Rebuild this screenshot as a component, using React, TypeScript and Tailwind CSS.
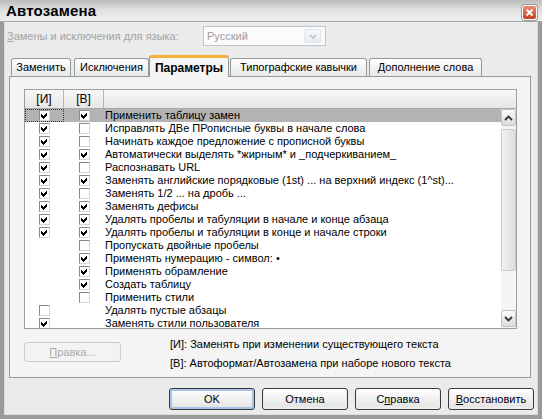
import React from 'react';

type Row = { t: string; a: boolean | null; b: boolean | null };

const rows: Row[] = [
  { t: 'Применить таблицу замен', a: true, b: true },
  { t: 'Исправлять ДВе ПРописные буквы в начале слова', a: true, b: false },
  { t: 'Начинать каждое предложение с прописной буквы', a: true, b: false },
  { t: 'Автоматически выделять *жирным* и _подчеркиванием_', a: true, b: true },
  { t: 'Распознавать URL', a: true, b: false },
  { t: 'Заменять английские порядковые (1st) ... на верхний индекс (1^st)...', a: true, b: true },
  { t: 'Заменять 1/2 ... на дробь ...', a: true, b: false },
  { t: 'Заменять дефисы', a: true, b: true },
  { t: 'Удалять пробелы и табуляции в начале и конце абзаца', a: true, b: true },
  { t: 'Удалять пробелы и табуляции в конце и начале строки', a: true, b: true },
  { t: 'Пропускать двойные пробелы', a: null, b: false },
  { t: 'Применять нумерацию - символ: •', a: null, b: true },
  { t: 'Применять обрамление', a: null, b: true },
  { t: 'Создать таблицу', a: null, b: true },
  { t: 'Применить стили', a: null, b: false },
  { t: 'Удалять пустые абзацы', a: false, b: null },
  { t: 'Заменять стили пользователя', a: true, b: null },
];

const font = { fontFamily: '"Liberation Sans", Arial, sans-serif' };

// Checkbox
const Check: React.FC<{ on: boolean }> = ({ on }) => (
  <div className="w-[11px] h-[11px] bg-white border border-t-[#8a8a8a] border-l-[#8a8a8a] border-b-[#d6d6d6] border-r-[#d6d6d6]">
    {on && (
      <svg width="9" height="9" viewBox="0 0 9 9" shapeRendering="crispEdges">
        <polygon points="1,3 3,5 7,1 7,4 3,8 1,6" fill="#000" />
      </svg>
    )}
  </div>
);

// Scroll arrow button
const ScrollBtn: React.FC<{ up?: boolean }> = ({ up }) => (
  <div className="h-[17px] w-[15px] rounded-[2px] border border-[#c3c3c3] bg-gradient-to-b from-[#fbfbfb] to-[#dcdcdc] flex items-center justify-center">
    <svg width="9" height="6" viewBox="0 0 9 6">
      <path d={up ? 'M1 5 L4.5 1.5 L8 5' : 'M1 1 L4.5 4.5 L8 1'} fill="none" stroke="#333" strokeWidth="1.8" />
    </svg>
  </div>
);

// Tab
const Tab: React.FC<{ label: string; active?: boolean; className?: string }> = ({ label, active, className = '' }) =>
  active ? (
    <div
      className={`relative z-10 -mb-[1px] h-[22px] bg-[#f4f4f4] border border-b-0 border-[#919b9c] border-t-[3px] border-t-[#f2b23a] rounded-t-[3px] flex items-center justify-center text-[12px] font-bold text-black ${className}`}
    >
      {label}
    </div>
  ) : (
    <div
      className={`h-[18px] bg-gradient-to-b from-white to-[#e8e8e8] border border-b-0 border-[#919b9c] rounded-t-[3px] flex items-center justify-center text-[11px] text-black ${className}`}
    >
      {label}
    </div>
  );

// Dialog button
const Btn: React.FC<{ children: React.ReactNode; def?: boolean }> = ({ children, def }) => (
  <div
    className={`w-[86px] h-[22px] rounded-[3px] border border-[#3a3a3a] bg-gradient-to-b from-white to-[#e2e2e2] flex items-center justify-center text-[11px] text-black ${
      def ? 'shadow-[inset_0_0_0_2px_#a9c3ea]' : 'shadow-[inset_0_-1px_0_1px_#ececec]'
    }`}
  >
    {children}
  </div>
);

export default function App() {
  return (
    <div className="w-[542px] h-[419px] flex flex-col bg-[#ebebeb] text-black" style={font}>
      {/* title bar */}
      <div className="h-[22px] shrink-0 flex items-start justify-between pl-[6px] pr-[5px] bg-gradient-to-b from-[#bcbcbc] via-[#e2e2e2] to-[#efefef] border-b border-[#a8a8a8]">
        <span className="text-[15px] font-bold leading-[22px] tracking-[0.2px]">Автозамена</span>
        <div className="mt-[5px] w-[15px] h-[15px] rounded-[3px] border border-white bg-gradient-to-b from-[#ec8a6e] to-[#c63d26] flex items-center justify-center shadow-[0_0_0_1px_#9b9b9b]">
          <svg width="9" height="9" viewBox="0 0 9 9">
            <path d="M1.5 1.5 L7.5 7.5 M7.5 1.5 L1.5 7.5" stroke="#fff" strokeWidth="1.8" />
          </svg>
        </div>
      </div>

      {/* body with frame */}
      <div className="flex-1 flex flex-col border-x-4 border-b-4 border-[#9a9a9a] shadow-[inset_1px_0_0_#dcdcdc,inset_-1px_0_0_#dcdcdc,inset_0_-1px_0_#dcdcdc]">
        {/* language row */}
        <div className="mt-[4px] h-[20px] flex items-center">
          <span className="w-[199px] pl-[3px] text-[11px] text-[#a3a3a3]">
            <u>З</u>амены и исключения для языка:
          </span>
          <div className="w-[123px] h-[20px] border border-[#b9c6d3] bg-[#fbfbfb] flex items-center justify-between pl-[3px] pr-[4px]">
            <span className="text-[11px] text-[#9d9d9d]">Русский</span>
            <div className="w-[17px] h-[14px] rounded-[2px] border border-[#e1e5ea] bg-gradient-to-b from-[#f6f7f9] to-[#e8ebef] flex items-center justify-center">
              <svg width="8" height="5" viewBox="0 0 8 5">
                <path d="M1 1 L4 4 L7 1" fill="none" stroke="#b9c1cc" strokeWidth="1.6" />
              </svg>
            </div>
          </div>
        </div>

        {/* tabs */}
        <div className="mt-[9px] h-[21px] flex items-end pl-[7px]">
          <Tab label="Заменить" className="w-[60px]" />
          <Tab label="Исключения" className="ml-[3px] w-[75px]" />
          <Tab label="Параметры" active className="w-[80px]" />
          <Tab label="Типографские кавычки" className="ml-[1px] w-[137px]" />
          <Tab label="Дополнение слова" className="ml-[2px] w-[113px]" />
        </div>

        {/* panel */}
        <div className="ml-[5px] w-[522px] h-[302px] border border-[#919b9c] bg-[#f4f4f4] pl-[14px] pt-[12px]">
          <div className="w-[493px] h-[240px] border border-[#9d9d9d] bg-white flex flex-col">
            <div className="h-[19px] shrink-0 grid grid-cols-[39px_40px_1fr] bg-gradient-to-b from-[#f8f8f8] to-[#e6e6e6] border-b border-[#a8a8a8] text-[12px]">
              <div className="flex items-center justify-center border-r border-[#b5b5b5]">[И]</div>
              <div className="flex items-center justify-center border-r border-[#b5b5b5]">[В]</div>
              <div />
            </div>
            <div className="flex-1 flex overflow-hidden">
              <div className="flex-1 flex flex-col">
                {rows.map((r, i) => (
                  <div
                    key={i}
                    className={`h-[13px] shrink-0 grid grid-cols-[39px_40px_1fr] items-center text-[11px] leading-[13px] ${
                      i === 0 ? 'bg-[#b3b3b3]' : ''
                    }`}
                  >
                    <div className={`h-[13px] flex items-center justify-center ${i === 0 ? 'outline-1 outline-dotted outline-offset-[-1px] outline-[#333]' : ''}`}>
                      {r.a !== null && <Check on={r.a} />}
                    </div>
                    <div className="flex items-center justify-center">{r.b !== null && <Check on={r.b} />}</div>
                    <div className="pl-[1px] whitespace-nowrap">{r.t}</div>
                  </div>
                ))}
              </div>
              <div className="w-[15px] shrink-0 bg-[#f5f5f5] flex flex-col">
                <ScrollBtn up />
                <div className="mt-[3px] h-[142px] rounded-[2px] border border-[#cdcdcd] bg-gradient-to-r from-[#f2f2f2] to-[#dedede]" />
                <div className="flex-1" />
                <div className="mb-[1px]">
                  <ScrollBtn />
                </div>
              </div>
            </div>
          </div>

          <div className="mt-[9px] flex items-start">
            <div className="mt-[4px] w-[97px] h-[20px] rounded-[3px] border border-[#cbcbcb] bg-[#f3f3f3] flex items-center justify-center text-[11px] text-[#a9a9a9]">
              <u>П</u>равка...
            </div>
            <div className="ml-[49px] flex flex-col gap-[6px] text-[11px] leading-[13px]">
              <span>[И]: Заменять при изменении существующего текста</span>
              <span>[В]: Автоформат/Автозамена при наборе нового текста</span>
            </div>
          </div>
        </div>

        {/* buttons */}
        <div className="mt-[10px] flex justify-end gap-[7px] pr-[4px]">
          <Btn def>OK</Btn>
          <Btn>Отмена</Btn>
          <Btn>
            <span>
              С<u>п</u>равка
            </span>
          </Btn>
          <Btn>
            <span>
              <u>В</u>осстановить
            </span>
          </Btn>
        </div>
      </div>
    </div>
  );
}
